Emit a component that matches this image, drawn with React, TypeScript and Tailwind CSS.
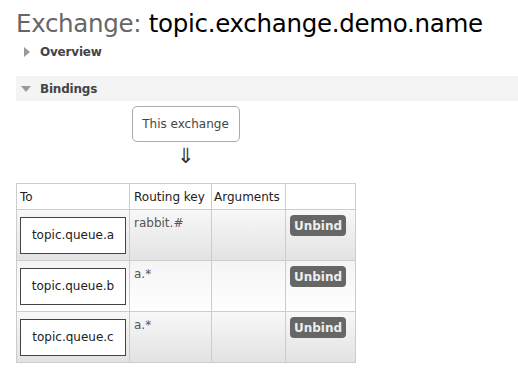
const bindings = [
  { queue: "topic.queue.a", key: "rabbit.#", alt: false },
  { queue: "topic.queue.b", key: "a.*", alt: true },
  { queue: "topic.queue.c", key: "a.*", alt: false },
];

export default function App() {
  return (
    <div
      className="h-[379px] w-[518px] overflow-hidden bg-white pl-4 text-[12px] text-[#484848]"
      style={{ fontFamily: '"DejaVu Sans", Verdana, sans-serif' }}
    >
      <h1 className="pt-[9px] text-[24.5px] leading-[30px] tracking-[-0.3px] text-[#666]">
        Exchange: <span className="text-black">topic.exchange.demo.name</span>
      </h1>

      <div className="mt-[5px] flex h-[16px] items-center gap-[10px] pl-[8px] font-bold text-[#444]">
        <span className="h-0 w-0 border-y-[5px] border-l-[6px] border-y-transparent border-l-[#999]" />
        <span className="tracking-[-0.2px]">Overview</span>
      </div>

      <div className="mt-[16px] flex h-[25px] items-center gap-[9px] bg-[#f4f4f4] pl-[5px] font-bold text-[#444]">
        <span className="h-0 w-0 border-x-[5px] border-t-[6px] border-x-transparent border-t-[#999]" />
        <span className="tracking-[-0.2px]">Bindings</span>
      </div>

      <div className="flex w-[339px] flex-col items-center">
        <div className="mt-[5px] flex h-[36px] w-[108px] items-center justify-center rounded-[5px] border border-[#aaa] text-[#444]">
          This exchange
        </div>
        <div className="mt-[2px] text-[21px] leading-[24px] text-[#333]">⇓</div>
      </div>

      <table className="mt-[15px] border-collapse text-left">
        <thead>
          <tr className="h-[26px]">
            <th className="w-[111px] border border-[#ccc] px-[3px] font-normal text-[#222]">To</th>
            <th className="w-[82px] border border-[#ccc] px-[4px] font-normal text-[#222]">Routing key</th>
            <th className="w-[74px] border border-[#ccc] px-[2px] font-normal text-[#222]">Arguments</th>
            <th className="w-[70px] border border-[#ccc]" />
          </tr>
        </thead>
        <tbody>
          {bindings.map((b) => (
            <tr
              key={b.queue}
              className={
                b.alt
                  ? "h-[51px] bg-gradient-to-b from-[#f4f4f4] to-white"
                  : "h-[51px] bg-gradient-to-b from-[#f8f8f8] to-[#e2e2e2]"
              }
            >
              <td className="border border-[#ccc] px-[3px] align-middle">
                <div className="flex h-[37px] w-[106px] items-center justify-center border border-[#444] bg-white text-[#222]">
                  {b.queue}
                </div>
              </td>
              <td className="border border-[#ccc] px-[4px] pt-[4px] align-top text-[#555]">{b.key}</td>
              <td className="border border-[#ccc]" />
              <td className="border border-[#ccc] px-[4px] pt-[5px] align-top">
                <span className="flex h-[21px] w-[56px] items-center justify-center rounded-[4px] bg-[#666] font-bold text-[#eee]">
                  Unbind
                </span>
              </td>
            </tr>
          ))}
        </tbody>
      </table>
    </div>
  );
}
